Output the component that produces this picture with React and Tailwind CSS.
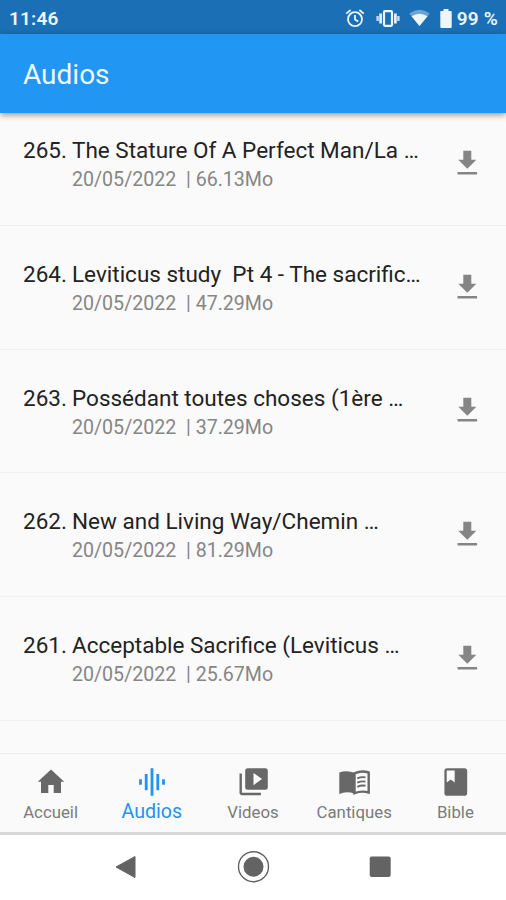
import React from "react";

const tracks = [
  { n: 265, title: "The Stature Of A Perfect Man/La …", size: "66.13Mo" },
  { n: 264, title: "Leviticus study  Pt 4 - The sacrific…", size: "47.29Mo" },
  { n: 263, title: "Possédant toutes choses (1ère …", size: "37.29Mo" },
  { n: 262, title: "New and Living Way/Chemin …", size: "81.29Mo" },
  { n: 261, title: "Acceptable Sacrifice (Leviticus …", size: "25.67Mo" },
];

function StatusBar() {
  return (
    <div className="flex h-[34px] shrink-0 items-center justify-between bg-[#1a6fb5] pt-[3px] pr-2 pl-[9px] text-[19px] leading-[30px] font-semibold text-[#eef6fd]">
      <span className="tracking-[0.2px]">11:46</span>
      <div className="flex items-center">
        <svg className="mr-[11px]" width="20" height="20" viewBox="0 0 20 20" fill="none" stroke="currentColor" strokeWidth="1.8">
          <circle cx="10" cy="10.2" r="7" />
          <path d="M10 6V10.500l3.200 2M1.200 4.600 5.600 1M18.800 4.600 14.400 1" />
        </svg>
        <svg className="mr-[9px]" width="24" height="20" viewBox="0 0 24 20" fill="none" stroke="currentColor">
          <rect x="8" y="2.200" width="8" height="14.600" rx="1" strokeWidth="2.200" />
          <path d="M4.600 4.500v10M19.400 4.500v10" strokeWidth="2.600" />
          <path d="M1.600 7v5M22.400 7v5" strokeWidth="2.400" opacity=".8" />
        </svg>
        <svg className="mr-[10px]" width="21" height="20" viewBox="0 0 21 20" fill="currentColor">
          <path opacity=".4" d="M.3 4.500Q10.500-2.800 20.700 4.500L10.500 17z" />
          <path d="M2.500 7.200Q10.500 2.200 18.500 7.200L10.500 17z" />
        </svg>
        <svg className="mr-[5px]" width="12" height="20" viewBox="0 0 12 20" fill="currentColor">
          <path d="M3.500 0h5v2H11q.7 0 .7.7v15.400q0 .8-.8.8H1.100q-.8 0-.8-.8V2.700q0-.7.7-.7h2.500z" />
        </svg>
        <span className="tracking-[0.2px]">99 %</span>
      </div>
    </div>
  );
}

function Track({ n, title, size }) {
  return (
    <li className="flex h-[123.75px] items-start border-b border-[#f0f0f0] pt-[34.2px] pr-[25px] pl-[23px]">
      <div className="w-[49px] shrink-0 text-[22.5px] leading-[29px] text-[#222]">{n}.</div>
      <div className="flex-1 whitespace-pre">
        <div className="text-[22.5px] leading-[29px] text-[#222]">{title}</div>
        <div className="text-[19.6px] leading-[29px] text-[#868686]">
          20/05/2022  | {size}
        </div>
      </div>
      <svg className="mt-[11.8px] shrink-0" width="28" height="28" viewBox="0 0 28 28" fill="#858585">
        <path d="M10.300 2.700h8v9h5L14.300 20.700 5.300 11.700h5zM4.500 24h19.600v2.600H4.500z" />
      </svg>
    </li>
  );
}

const tabs = [
  {
    label: "Accueil",
    icon: <path d="M15 2.500 28.200 14.700H25V26h-7.300v-8h-5.400v8H5V14.700H1.800z" />,
  },
  {
    label: "Audios",
    active: true,
    icon: (
      <path
        d="M3.500 12.300v5.400M9.200 7v16.200M15 1.300v27.400M20.800 7v16.200M26.500 12.300v5.400"
        stroke="currentColor"
        strokeWidth="2.800"
      />
    ),
  },
  {
    label: "Videos",
    icon: (
      <path
        fillRule="evenodd"
        d="M1.500 6.500h2.400v19.200h19v2.500H4.200Q1.500 28.200 1.500 25.500zM9.700 1.200h17.600q2.500 0 2.500 2.500v16.500q0 2.500-2.500 2.500H9.700Q7.200 22.700 7.200 20.200V3.700Q7.200 1.200 9.700 1.200zM15.500 6v12.200l8.500-6.100z"
      />
    ),
  },
  {
    label: "Cantiques",
    icon: (
      <>
        <path d="M.3 5.500Q7.500 2.800 15.500 5.700v21Q7.500 23.600.3 27z" />
        <path d="M15.500 6.300q7-3.200 14.200-.8v20q-7-2-14.200.7z" fill="#fafafa" stroke="currentColor" strokeWidth="2.400" />
        <path d="M18.300 11.400q4.200-1.800 8.200-1M18.300 15.600q4.200-1.800 8.200-1M18.300 19.800q4.200-1.800 8.200-1" fill="none" stroke="currentColor" strokeWidth="1.900" />
      </>
    ),
  },
  {
    label: "Bible",
    icon: (
      <path
        fillRule="evenodd"
        d="M7.200 1.300h17.200q2.800 0 2.800 2.800v21.800q0 2.800-2.800 2.800H7.200q-2.800 0-2.800-2.800V4.100Q4.400 1.300 7.200 1.300zM6.700 3.500v12l4-2.900 4 2.900V3.500z"
      />
    ),
  },
];

function TabBar() {
  return (
    <nav className="grid h-[82px] shrink-0 grid-cols-5 border-t border-b-[3px] border-t-[#ededed] border-b-[#d6d6d6] bg-[#fafafa]">
      {tabs.map((t) => (
        <div
          key={t.label}
          className={"flex flex-col items-center pt-[13px] " + (t.active ? "text-[#2492f2]" : "text-[#686868]")}
        >
          <svg width="30" height="30" viewBox="0 0 30 30" fill="currentColor" className="shrink-0 overflow-visible">
            {t.icon}
          </svg>
          <span className={t.active ? "text-[19.6px] leading-[29px]" : "text-[16.8px] leading-[31px] text-[#7b7b7b]"}>
            {t.label}
          </span>
        </div>
      ))}
    </nav>
  );
}

function SystemNav() {
  return (
    <div className="flex h-[65px] shrink-0 items-center justify-around bg-white px-[63px] pb-px text-[#636363]">
      <svg width="32" height="34" viewBox="0 0 32 34" fill="currentColor">
        <path d="M25 6.500v21L6 17z" stroke="currentColor" strokeLinejoin="round" />
      </svg>
      <svg width="34" height="34" viewBox="0 0 34 34" fill="none" stroke="currentColor">
        <circle cx="17.500" cy="16.700" r="15" strokeWidth="1.400" />
        <circle cx="17.500" cy="16.700" r="10" fill="currentColor" stroke="none" />
      </svg>
      <svg width="32" height="34" viewBox="0 0 32 34" fill="currentColor">
        <rect x="5.700" y="6.500" width="21" height="20.500" rx="2" />
      </svg>
    </div>
  );
}

export default function App() {
  return (
    <div className="flex h-[900px] w-[506px] flex-col overflow-hidden bg-[#fafafa] font-['Roboto',sans-serif]">
      <StatusBar />
      <header className="relative z-10 flex h-[79px] shrink-0 items-center bg-[#2196f3] pt-[2px] pl-[23px] text-[28px] leading-8 text-[#eff8ff] shadow-[0_2px_6px_rgba(0,0,0,0.4)]">
        Audios
      </header>
      <ul className="-mt-[11px] min-h-0 flex-1 overflow-hidden">
        {tracks.map((t) => (
          <Track key={t.n} {...t} />
        ))}
      </ul>
      <TabBar />
      <SystemNav />
    </div>
  );
}
